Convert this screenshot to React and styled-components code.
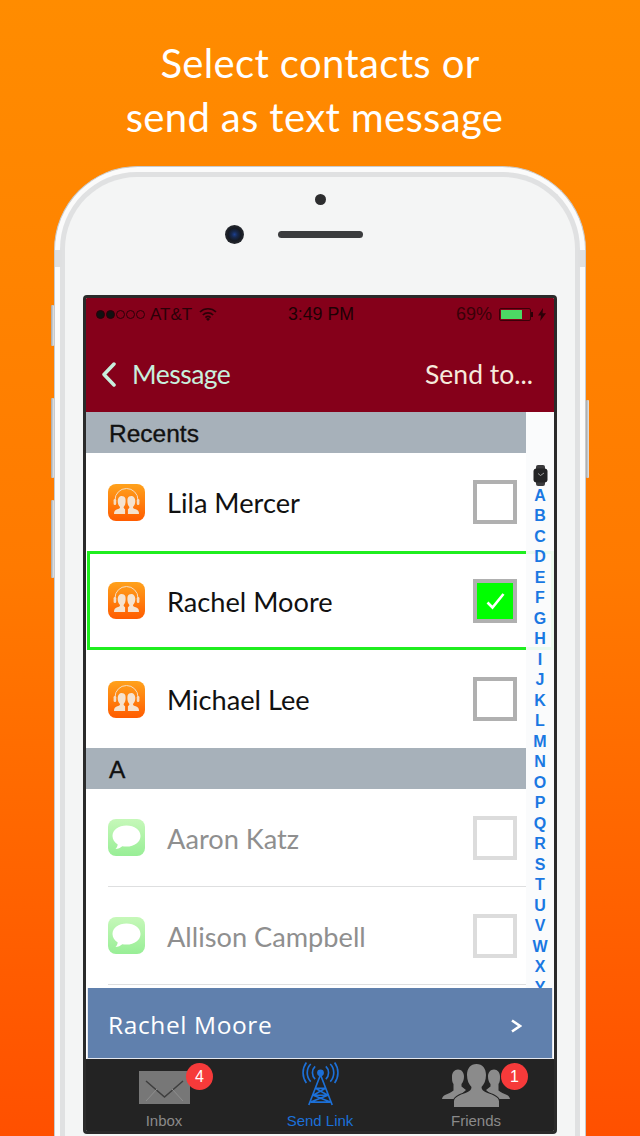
import React from "react";
import styled, { createGlobalStyle } from "styled-components";

const Global = createGlobalStyle`
  html, body { margin: 0; padding: 0; height: 1136px; overflow: hidden; }
  * { box-sizing: border-box; }
`;

const Page = styled.div`
  width: 640px;
  height: 1136px;
  overflow: hidden;
  padding-top: 36px;
  background: linear-gradient(180deg, #ff8c00 0%, #ff7a00 50%, #ff5000 100%);
`;

const Heading = styled.h1`
  margin: 0 0 22px;
  font: 400 40px/54px Lato, "Open Sans", sans-serif;
  letter-spacing: 0.35px;
  color: #fff;
  text-align: center;
`;

const HeadingLine = styled.span`
  display: block;
  padding-right: ${(p) => p.$inset || 0}px;
`;

const Phone = styled.div`
  position: relative;
  width: 532px;
  height: 1040px;
  margin-left: 54px;
  padding: 5px;
  border: 1px solid #c9cbcd;
  border-bottom: 0;
  border-radius: 84px 84px 0 0;
  background: #fbfbfb;
`;

const SideButton = styled.span`
  position: absolute;
  top: ${(p) => p.$top}px;
  ${(p) => (p.$right ? "right: -4px;" : "left: -4px;")}
  width: 3px;
  height: ${(p) => p.$h}px;
  background: linear-gradient(90deg, #a4a6a8, #e6e7e8);
  border-radius: 1px;
`;

const Band = styled.span`
  position: absolute;
  top: 83px;
  ${(p) => (p.$right ? "right: 0;" : "left: 0;")}
  width: 7px;
  height: 17px;
  background: #dfe0e1;
`;

const Face = styled.div`
  height: 100%;
  padding: 0 18px;
  border: 5px solid #e0e1e2;
  border-bottom: 0;
  border-radius: 77px 77px 0 0;
  background: #f4f5f5;
`;

const Bezel = styled.div`
  height: 118px;
  padding-top: 17px;
  display: flex;
  flex-direction: column;
  align-items: center;
`;

const ProximityDot = styled.span`
  width: 11px;
  height: 11px;
  border-radius: 50%;
  background: #2d2d2f;
`;

const CameraRow = styled.div`
  display: flex;
  align-items: center;
  gap: 34px;
  margin-top: 20px;
  padding-right: 53px;
`;

const Camera = styled.span`
  width: 19px;
  height: 19px;
  border-radius: 50%;
  background: radial-gradient(circle at 50% 50%, #1c3f8f 0, #17294f 22%, #161a22 48%, #3a3b3e 100%);
`;

const Speaker = styled.span`
  width: 85px;
  height: 7px;
  border-radius: 4px;
  background: #3b3c3e;
`;

const Screen = styled.div`
  width: 474px;
  height: 839px;
  border: 3px solid #2a2a2a;
  border-radius: 4px;
  background: #fff;
  display: flex;
  flex-direction: column;
  overflow: hidden;
`;

const Header = styled.div`
  height: 114px;
  flex: none;
  background: #85001a;
`;

const StatusBar = styled.div`
  height: 32px;
  padding: 0 8px 0 10px;
  display: flex;
  align-items: center;
  font: 400 17px/1 "Liberation Sans", Arial, sans-serif;
  color: #2b0008;
`;

const Signal = styled.div`
  display: flex;
  gap: 1px;
`;

const SignalDot = styled.span`
  width: 9px;
  height: 9px;
  border-radius: 50%;
  border: 1px solid #2b0008;
  background: ${(p) => (p.$on ? "#111" : "transparent")};
`;

const StatusGroup = styled.div`
  flex: 1;
  display: flex;
  align-items: center;
  justify-content: ${(p) => p.$justify || "flex-start"};
  gap: ${(p) => p.$gap || 0}px;
`;

const Carrier = styled.span`
  margin-right: 2px;
`;

const Time = styled.span`
  padding-top: 1px;
  font-size: 17.8px;
  color: #1e0004;
`;

const Percent = styled.span`
  margin-right: 7px;
  font-size: 18px;
  color: #3a0008;
`;

const BatteryShell = styled.span`
  display: inline-flex;
  width: 32px;
  height: 13px;
  padding: 1px;
  border: 1px solid #3a0008;
  border-radius: 2px;
`;

const BatteryFill = styled.span`
  width: 21px;
  background: #4cd964;
`;

const BatteryTip = styled.span`
  width: 2px;
  height: 5px;
  margin-right: 5px;
  background: #2b0008;
`;

const NavBar = styled.div`
  height: 82px;
  padding: 7px 21px 0 15px;
  display: flex;
  align-items: center;
  justify-content: space-between;
  font: 400 26.5px/1 Lato, "Open Sans", sans-serif;
`;

const NavBack = styled.div`
  display: flex;
  align-items: center;
  gap: 16px;
  letter-spacing: -0.5px;
  color: #c8efdd;
`;

const NavAction = styled.div`
  color: #f6e9dc;
`;

const Body = styled.div`
  position: relative;
  height: 576px;
  flex: none;
  overflow: hidden;
`;

const SectionHeader = styled.div`
  width: 440px;
  height: 41px;
  padding: 4px 0 0 23px;
  display: flex;
  align-items: center;
  background: #a7b1ba;
  font: 400 24.5px/1 "Liberation Sans", Arial, sans-serif;
  -webkit-text-stroke: 0.35px #111;
  color: #111;
`;

const Row = styled.div`
  height: ${(p) => (p.$selected ? 99 : 98)}px;
  padding-left: ${(p) => (p.$selected ? 18 : 22)}px;
  margin-left: ${(p) => (p.$selected ? 1 : 0)}px;
  border: ${(p) => (p.$selected ? "3px solid #1fee1f" : "0")};
  background: #fff;
  display: flex;
`;

const RowInner = styled.div`
  flex: none;
  width: 418px;
  padding-right: 9px;
  display: flex;
  align-items: center;
  gap: 22px;
  border-bottom: ${(p) => (p.$divider ? "1px solid #dedfe0" : "0")};
`;

const AppIcon = styled.span`
  flex: none;
  width: 37px;
  height: 37px;
  border-radius: 8px;
  display: flex;
  align-items: center;
  justify-content: center;
  background: ${(p) =>
    p.$sms
      ? "linear-gradient(180deg, #c6f8b9, #98ee96)"
      : "linear-gradient(180deg, #ffa21c, #ff5c00)"};
`;

const Name = styled.span`
  flex: 1;
  padding-top: 2px;
  font: 400 27.2px/1 Lato, "Open Sans", sans-serif;
  color: ${(p) => (p.$muted ? "#8f8f8f" : "#111")};
`;

const Check = styled.span`
  flex: none;
  width: 44px;
  height: 44px;
  border: 4px solid ${(p) => (p.$muted ? "#dcdcdc" : "#b0b0b0")};
  background: ${(p) => (p.$on ? "#00ff00" : "#fff")};
  display: flex;
  align-items: center;
  justify-content: center;
`;

const Index = styled.div`
  position: absolute;
  top: 0;
  right: 0;
  bottom: 0;
  width: 28px;
  padding-top: 53px;
  background: rgba(250, 251, 252, 0.94);
  display: flex;
  flex-direction: column;
  align-items: center;
  font: 700 16px/20.5px "Liberation Sans", Arial, sans-serif;
  color: #1a78e2;
`;

const IndexItem = styled.span`
  flex: none;
  height: 20.5px;
  display: flex;
  align-items: center;
`;

const SelectedBar = styled.div`
  height: 71px;
  flex: none;
  margin: 0 1px;
  padding: 5px 30px 0 20px;
  border: 1px solid #e4e7ee;
  border-top: 0;
  display: flex;
  align-items: center;
  justify-content: space-between;
  background: #6080ad;
  font: 400 24.5px/1 "Open Sans", sans-serif;
  letter-spacing: 0.6px;
  color: #fff;
`;

const TabBar = styled.div`
  flex: 1;
  display: grid;
  grid-template-columns: repeat(3, 1fr);
  background: #232323;
`;

const Tab = styled.div`
  position: relative;
  display: flex;
  flex-direction: column;
  align-items: center;
  justify-content: flex-end;
  padding-bottom: 2px;
  font: 400 15px/18px "Liberation Sans", Arial, sans-serif;
  color: ${(p) => (p.$active ? "#1c70d8" : "#8a8a8a")};
`;

const TabIcon = styled.div`
  height: 45px;
  margin-bottom: ${(p) => p.$lift || 5}px;
  display: flex;
  align-items: flex-end;
  justify-content: center;
`;

const Badge = styled.span`
  position: absolute;
  top: 4px;
  left: ${(p) => p.$left}px;
  width: 27px;
  height: 27px;
  border-radius: 50%;
  background: #f63a3a;
  display: flex;
  align-items: center;
  justify-content: center;
  font: 400 16px/1 "Liberation Sans", Arial, sans-serif;
  color: #fff;
`;

const Chevron = ({ w, h, color, sw }) => (
  <svg width={w} height={h} viewBox="0 0 15 25" fill="none">
    <path d="M13 2 3 12.5 13 23" stroke={color} strokeWidth={sw} strokeLinecap="round" strokeLinejoin="round" />
  </svg>
);

const Wifi = () => (
  <svg width="18" height="14" viewBox="0 0 18 14" fill="none" stroke="#2b0008" strokeWidth="1.7">
    <path d="M1 5a11.5 11.5 0 0 1 16 0" />
    <path d="M3.8 8a7.5 7.5 0 0 1 10.4 0" />
    <path d="M6.4 10.7a3.8 3.8 0 0 1 5.2 0" />
    <path d="M9 14l-2-2a3 3 0 0 1 4 0z" fill="#2b0008" stroke="none" />
  </svg>
);

const Bolt = () => (
  <svg width="8" height="13" viewBox="0 0 8 13">
    <path d="M5 0 0 7.5h3L2.2 13 8 5.2H4.6z" fill="#2b0008" />
  </svg>
);

const Watch = () => (
  <svg width="15" height="21" viewBox="0 0 15 21">
    <rect x="3" y="0" width="9" height="21" rx="2" fill="#3a3a3c" />
    <rect x="0.5" y="3.5" width="14" height="14" rx="3" fill="#232325" />
    <path d="M7.5 10.5 11 8M7.5 10.5 5 8.5" stroke="#bbb" strokeWidth="0.8" />
  </svg>
);

const Listeners = () => (
  <svg width="31" height="31" viewBox="0 0 31 31">
    <path d="M4 15V13a11.5 11.5 0 0 1 23 0v2" fill="none" stroke="#f5dcc2" strokeWidth="1" />
    <rect x="2.6" y="12" width="2.6" height="6" rx="1.2" fill="#f5dcc2" />
    <rect x="25.8" y="12" width="2.6" height="6" rx="1.2" fill="#f5dcc2" />
    <path d="M3 27c0-3 1-4.200 4-5 1.500-.4 2-1 2-2-1.500-1.500-2.300-3.500-2.300-6 0-3 1.600-5 4-5 1.700 0 3 .8 3.600 2.200.2.800.3 1.800.3 2.800 0 2.500-.6 4.500-2 6 0 1 .6 1.700 1.500 2.200V27zM28 27c0-3-1-4.200-4-5-1.500-.4-2-1-2-2 1.500-1.500 2.300-3.500 2.300-6 0-3-1.600-5-4-5-1.700 0-3 .8-3.600 2.200-.2.800-.3 1.800-.3 2.800 0 2.500.6 4.500 2 6 0 1-.6 1.700-1.500 2.200V27z" fill="#f5e3d0" />
  </svg>
);

const Bubble = () => (
  <svg width="31" height="27" viewBox="0 0 31 27">
    <path d="M15.500 1.500C7.500 1.500 1.500 6 1.500 12c0 3.500 2 6.500 5.200 8.500-.2 1.800-1 3.300-2.200 4.500 2.500-.2 5-1.200 6.800-2.800 1.300.3 2.700.4 4.200.4 8 0 14-4.600 14-10.600S23.500 1.500 15.500 1.500z" fill="#fff" />
  </svg>
);

const Tick = () => (
  <svg width="19" height="18" viewBox="0 0 19 18" fill="none">
    <path d="M1.500 10.500 6.500 15.500 17.500 2" stroke="#fff" strokeWidth="2.600" />
  </svg>
);

const Envelope = () => (
  <svg width="51" height="33" viewBox="0 0 51 33">
    <rect width="51" height="33" fill="#777" />
    <path d="M7 10 25.500 26 44 10" fill="none" stroke="#3e3e3e" strokeWidth="1.500" />
    <path d="M7 30 18 18M44 30 33 18" fill="none" stroke="#8e8e8e" strokeWidth="1" />
  </svg>
);

const Tower = () => (
  <svg width="39" height="45" viewBox="0 0 40 46" fill="none" stroke="#1c70d8">
    <circle cx="20" cy="11" r="3.500" fill="#1c70d8" stroke="none" />
    <path d="M14.500 4.500a9 9 0 0 0 0 13M25.500 4.500a9 9 0 0 1 0 13M10 2a13 13 0 0 0 0 18M30 2a13 13 0 0 1 0 18M5.500.5a18 18 0 0 0 0 21M34.500.500a18 18 0 0 1 0 21" strokeWidth="1.700" />
    <path d="M20 13 8 44M20 13l12 31M15 27h10M12.500 34h15M10 41h20M15 27l12.500 7M25 27l-12.500 7M12.500 34 30 41M27.500 34 10 41" strokeWidth="1.700" />
  </svg>
);

const sidePerson =
  "M16 5.500c3.500 0 6 2.800 6 7 0 3.500-1.200 6-2.500 7.500v2.500L24 26 14 35H0c.3-2 1.200-3 3-4 3-1.500 6.500-2.500 8.500-4.500V20C10 18.500 10 15.500 10 12.500c0-4 2.500-7 6-7z";

const Friends = () => (
  <svg width="68" height="43" viewBox="0 0 68 43" fill="#8b8b8b">
    <path d={sidePerson} />
    <path d={sidePerson} transform="matrix(-1 0 0 1 68 0)" />
    <path
      d="M34.500 0c6 0 9.500 4.500 9.500 11 0 5.500-2 9.500-4.500 12 0 3 2 4.500 6 6 6 2.200 11.500 4 11.500 8.500V43H12v-5.500c0-4.500 5.500-6.300 11.500-8.500 4-1.500 6-3 6-6C27 20.500 25 16.500 25 11c0-6.500 3.500-11 9.500-11z"
      stroke="#232323"
      strokeWidth="2"
      paintOrder="stroke"
    />
  </svg>
);

const letters = "ABCDEFGHIJKLMNOPQRSTUVWXY".split("");

const Contact = ({ name, sms, selected, divider }) => (
  <Row $selected={selected}>
    <RowInner $divider={divider}>
      <AppIcon $sms={sms}>{sms ? <Bubble /> : <Listeners />}</AppIcon>
      <Name $muted={sms}>{name}</Name>
      <Check $muted={sms} $on={selected}>{selected && <Tick />}</Check>
    </RowInner>
  </Row>
);

export default function App() {
  return (
    <Page>
      <Global />
      <Heading>
        <HeadingLine>Select contacts or</HeadingLine>
        <HeadingLine $inset={11}>send as text message</HeadingLine>
      </Heading>
      <Phone>
        <SideButton $top={138} $h={41} />
        <SideButton $top={231} $h={80} />
        <SideButton $top={333} $h={78} />
        <SideButton $right $top={233} $h={78} />
        <Band />
        <Band $right />
        <Face>
          <Bezel>
            <ProximityDot />
            <CameraRow>
              <Camera />
              <Speaker />
            </CameraRow>
          </Bezel>
          <Screen>
            <Header>
              <StatusBar>
                <StatusGroup $gap={5}>
                  <Signal>
                    <SignalDot $on />
                    <SignalDot $on />
                    <SignalDot />
                    <SignalDot />
                    <SignalDot />
                  </Signal>
                  <Carrier>AT&amp;T</Carrier>
                  <Wifi />
                </StatusGroup>
                <Time>3:49 PM</Time>
                <StatusGroup $justify="flex-end">
                  <Percent>69%</Percent>
                  <BatteryShell>
                    <BatteryFill />
                  </BatteryShell>
                  <BatteryTip />
                  <Bolt />
                </StatusGroup>
              </StatusBar>
              <NavBar>
                <NavBack>
                  <Chevron w={15} h={25} color="#c8efdd" sw={3.5} />
                  Message
                </NavBack>
                <NavAction>Send to...</NavAction>
              </NavBar>
            </Header>
            <Body>
              <SectionHeader>Recents</SectionHeader>
              <Contact name="Lila Mercer" />
              <Contact name="Rachel Moore" selected />
              <Contact name="Michael Lee" />
              <SectionHeader>A</SectionHeader>
              <Contact name="Aaron Katz" sms divider />
              <Contact name="Allison Campbell" sms divider />
              <Index>
                <IndexItem>
                  <Watch />
                </IndexItem>
                {letters.map((l) => (
                  <IndexItem key={l}>{l}</IndexItem>
                ))}
              </Index>
            </Body>
            <SelectedBar>
              Rachel Moore
              <svg width="12" height="14" viewBox="0 0 12 14" fill="none">
                <path d="M2 1.500 10 7l-8 5.500" stroke="#fff" strokeWidth="2.600" />
              </svg>
            </SelectedBar>
            <TabBar>
              <Tab>
                <TabIcon $lift={8}>
                  <Envelope />
                </TabIcon>
                Inbox
                <Badge $left={100}>4</Badge>
              </Tab>
              <Tab $active>
                <TabIcon>
                  <Tower />
                </TabIcon>
                Send Link
              </Tab>
              <Tab>
                <TabIcon>
                  <Friends />
                </TabIcon>
                Friends
                <Badge $left={103}>1</Badge>
              </Tab>
            </TabBar>
          </Screen>
        </Face>
      </Phone>
    </Page>
  );
}
